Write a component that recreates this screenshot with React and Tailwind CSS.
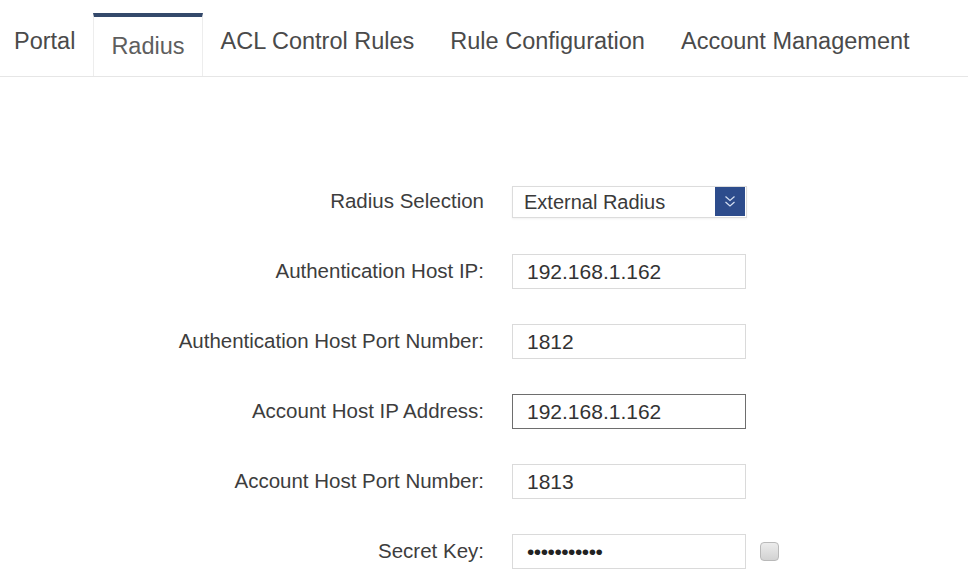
import { useState } from 'react';

const tabs = ['Portal', 'Radius', 'ACL Control Rules', 'Rule Configuration', 'Account Management'];

const fields = [
    { label: 'Authentication Host IP:', value: '192.168.1.162' },
    { label: 'Authentication Host Port Number:', value: '1812' },
    { label: 'Account Host IP Address:', value: '192.168.1.162', focused: true },
    { label: 'Account Host Port Number:', value: '1813' },
];

function Row({ label, children }) {
    return (
        <div className="flex items-center h-[70px]">
            <div className="w-[484px] text-right text-[20.5px] text-[#3d3d3d] leading-none">{label}</div>
            <div className="ml-[28px] flex items-center">{children}</div>
        </div>
    );
}

export default function App() {
    const [active, setActive] = useState('Radius');

    return (
        <div className="w-[976px] h-[584px] bg-white overflow-hidden font-['Liberation_Sans',Arial,sans-serif]">
            <div className="pt-[13px] pr-[8px]">
                <div className="flex border-b border-[#e6e6e6]">
                    {tabs.map((tab, i) => {
                        const isActive = tab === active;
                        return (
                            <div
                                key={tab}
                                onClick={() => setActive(tab)}
                                className={
                                    isActive
                                        ? 'border-t-4 border-t-[#34496b] border-x border-x-[#ededed] bg-white pt-[18px] pb-[17px] pl-[17px] pr-[17px] text-[23.5px] leading-none text-[#5e5e5e] cursor-pointer'
                                        : `bg-white pt-[17px] pb-[22px] ${i === 0 ? 'pl-[14px] pr-[18px]' : 'px-[18px]'} text-[23.5px] leading-none text-[#4a4a4a] cursor-pointer`
                                }
                            >
                                {tab}
                            </div>
                        );
                    })}
                </div>
            </div>

            <div className="pt-[90px]">
                <Row label="Radius Selection">
                    <div className="w-[235px] h-[32px] border border-[#dcdcdc] flex items-center justify-between pl-[11px] pr-[1px] shadow-[0_1px_2px_rgba(0,0,0,0.06)]">
                        <span className="text-[20px] text-[#3a3a3a] leading-none">External Radius</span>
                        <div className="w-[30px] h-[29px] bg-[#2d4c8c] flex items-center justify-center">
                            <svg width="14" height="15" viewBox="0 0 14 15" fill="none" stroke="#d6e0f2" strokeWidth="1.2">
                                <path d="M2.5 2.5 L7 6.5 L11.5 2.5" />
                                <path d="M2.5 8 L7 12 L11.5 8" />
                            </svg>
                        </div>
                    </div>
                </Row>
                {fields.map((f) => (
                    <Row key={f.label} label={f.label}>
                        <input
                            readOnly
                            value={f.value}
                            className={`w-[234px] h-[35px] pl-[14px] text-[21px] text-[#333] outline-none ${
                                f.focused ? 'border-[1.5px] border-[#6e6e6e]' : 'border border-[#dadada]'
                            }`}
                        />
                    </Row>
                ))}
                <Row label="Secret Key:">
                    <div className="w-[234px] h-[35px] border border-[#dadada] pl-[14px] flex items-center text-[21px] text-[#222] leading-none tracking-[-0.5px]">
                        •••••••••••
                    </div>
                    <div className="ml-[14px] w-[19px] h-[19px] rounded-[4px] border border-[#b9b9b9] bg-gradient-to-b from-[#ececec] to-[#d2d2d2]" />
                </Row>
            </div>
        </div>
    );
}
